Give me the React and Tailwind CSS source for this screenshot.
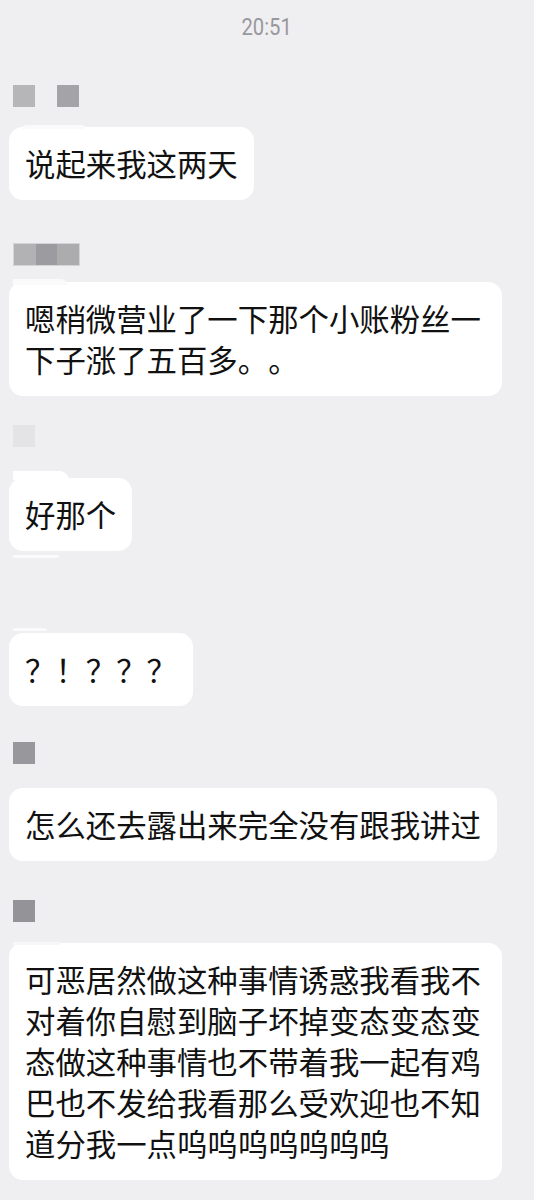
import React from "react";

const cjk = "font-['Noto_Sans_CJK_SC','Noto_Sans_CJK_JP',sans-serif]";

function Bubble({ children, className = "", lips = null }) {
  return (
    <div
      className={`relative self-start ml-[9px] max-w-[493px] bg-white rounded-[14px] px-[16px] py-[16px] text-[30.4px] leading-[41px] text-[#111111] [text-spacing-trim:space-all] ${cjk} ${className}`}
    >
      {lips}
      <span className="relative">{children}</span>
    </div>
  );
}

export default function App() {
  return (
    <div className="w-full min-h-[1200px] bg-[#efeff2] flex flex-col">
      <div className="h-[56px] flex items-center justify-center">
        <span className="inline-block scale-x-[0.88] font-['Roboto',sans-serif] text-[23px] text-[#98989c]">
          20:51
        </span>
      </div>

      {/* name 1 */}
      <div className="mt-[29px] ml-[13px] h-[22px] flex gap-[22px]">
        <div className="w-[22px] h-[22px] bg-[#b6b6b9]" />
        <div className="w-[22px] h-[22px] bg-[#a4a4a8]" />
      </div>
      <Bubble
        className="mt-[20px]"
        lips={<div className="absolute left-[14px] top-[-2px] w-[62px] h-[4px] bg-[#fafafb] rounded-t-[3px]" />}
      >
        说起来我这两天
      </Bubble>

      {/* name 2 */}
      <div className="mt-[43px] ml-[13px] h-[23px] flex border border-[#d4d4d7] w-[67px]">
        <div className="flex-1 bg-[#b2b2b5]" />
        <div className="flex-1 bg-[#9c9ca0]" />
        <div className="flex-1 bg-[#acacaf]" />
      </div>
      <Bubble
        className="mt-[16px]"
        lips={<div className="absolute left-[4px] top-[-3px] w-[54px] h-[6px] bg-[#fafafb] rounded-tr-[6px]" />}
      >
        嗯稍微营业了一下那个小账粉丝一下子涨了五百多。。
      </Bubble>

      {/* name 3 */}
      <div className="mt-[29px] ml-[13px] h-[22px] w-[22px] bg-[#e4e4e7]" />
      <Bubble
        className="mt-[31px]"
        lips={
          <>
            <div className="absolute left-[4px] top-[-7px] w-[56px] h-[9px] bg-white rounded-tr-[10px]" />
            <div className="absolute left-[4px] bottom-[-7px] w-[46px] h-[3px] bg-[#fafafb] rounded-br-[3px]" />
          </>
        }
      >
        好那个
      </Bubble>

      <Bubble
        className="mt-[82px]"
        lips={<div className="absolute left-[4px] top-[-5px] w-[34px] h-[3px] bg-[#fafafb] rounded-tr-[3px]" />}
      >
        ？！？？？
      </Bubble>

      {/* name 5 */}
      <div className="mt-[36px] ml-[13px] h-[22px] w-[22px] bg-[#98989c]" />
      <Bubble className="mt-[24px]">怎么还去露出来完全没有跟我讲过</Bubble>

      {/* name 6 */}
      <div className="mt-[39px] ml-[13px] h-[22px] w-[22px] bg-[#949498]" />
      <Bubble
        className="mt-[21px]"
        lips={<div className="absolute left-[4px] top-[-1px] w-[48px] h-[3px] bg-[#f7f7f8] rounded-tr-[3px]" />}
      >
        可恶居然做这种事情诱惑我看我不对着你自慰到脑子坏掉变态变态变态做这种事情也不带着我一起有鸡巴也不发给我看那么受欢迎也不知道分我一点呜呜呜呜呜呜呜
      </Bubble>
    </div>
  );
}
